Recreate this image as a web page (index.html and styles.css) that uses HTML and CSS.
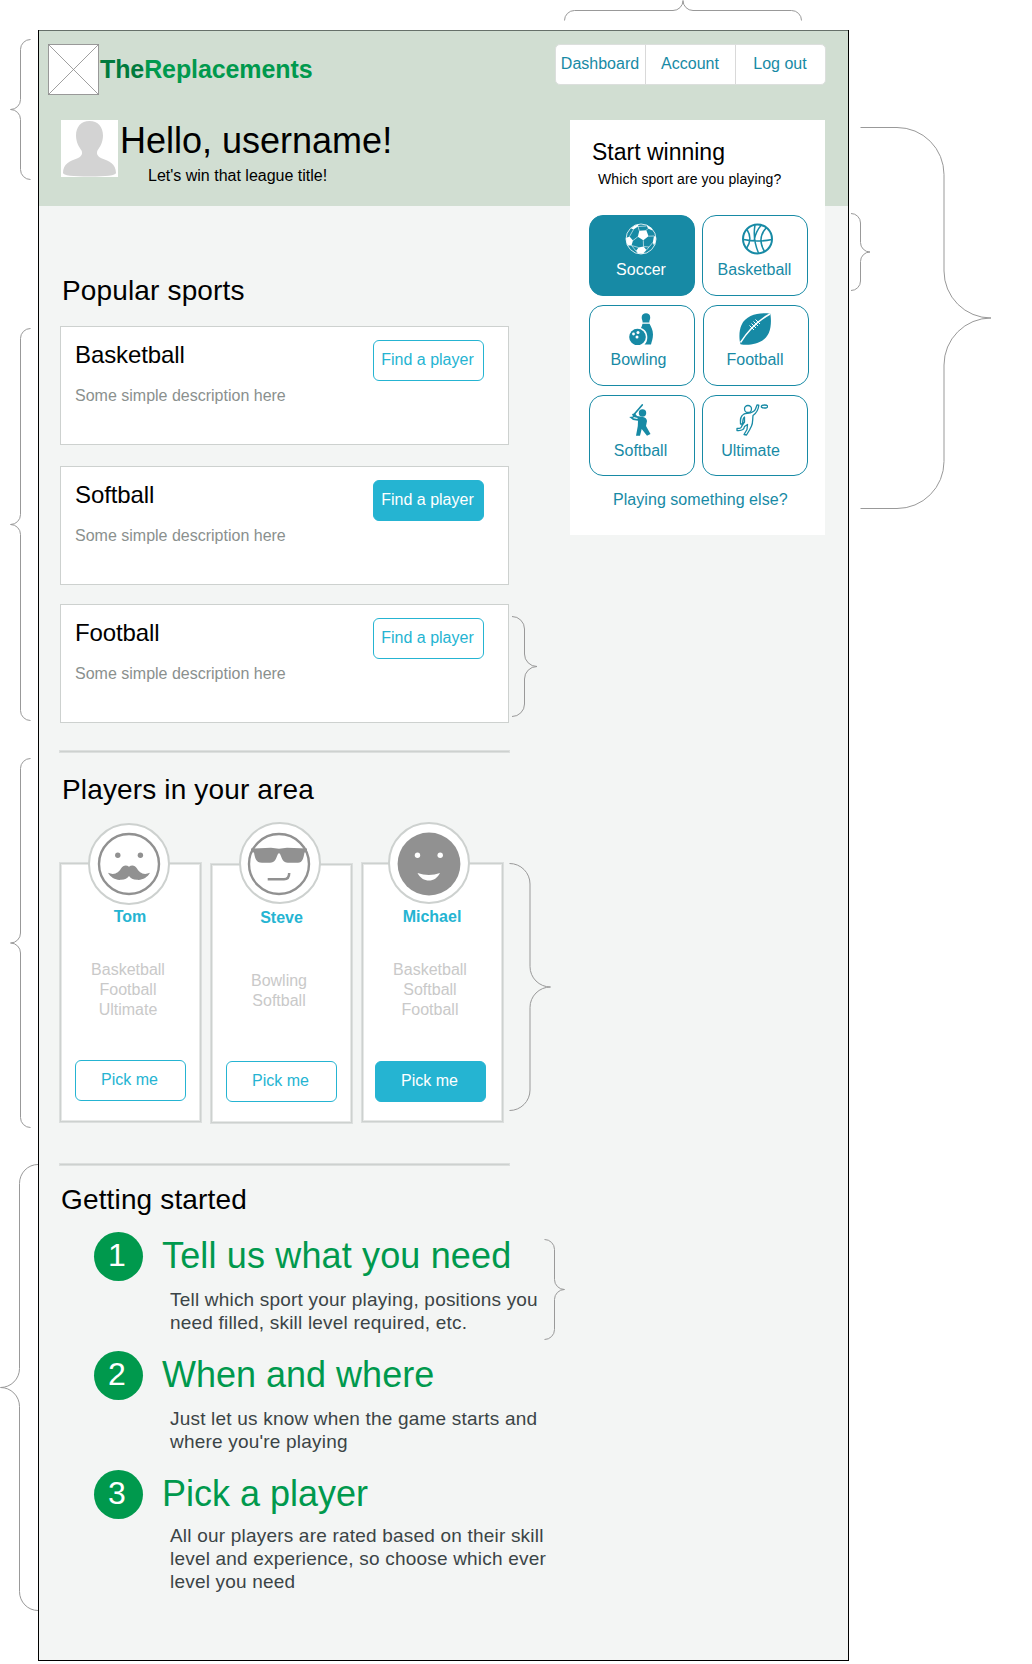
FILE: index.html
```html
<!DOCTYPE html>
<html lang="en">
<head>
<meta charset="utf-8">
<title>TheReplacements</title>
<link rel="stylesheet" href="styles.css">
</head>
<body>
<div class="frame">
  <header class="header">
    <div class="topbar">
      <div class="brand">
        <svg class="logo" width="51" height="51" viewBox="0 0 51 51"><rect x=".5" y=".5" width="50" height="50" fill="#fff" stroke="#999"/><path d="M.5 .5l50 50M50.500 .5l-50 50" stroke="#888" stroke-width=".8"/></svg>
        <span class="brand-name"><span class="brand-the">The</span>Replacements</span>
      </div>
      <nav class="nav">
        <a class="nav-item">Dashboard</a>
        <a class="nav-item">Account</a>
        <a class="nav-item">Log out</a>
      </nav>
    </div>
    <div class="greeting">
      <svg class="avatar" width="57" height="57" viewBox="0 0 57 57"><rect width="57" height="57" fill="#fff"/><path d="M28.500 1C37 1 42 7 42 15.500C42 22 39 27 36.500 30.500C35 34 36.500 36.500 41 38.500C48 41 55 44 55 53C55 55.500 45 56.500 28.500 56.500S2 55.500 2 53C2 44 9 41 16 38.500C20.500 36.500 22 34 20.500 30.500C18 27 15 22 15 15.500C15 7 20 1 28.500 1Z" fill="#d3d3d3"/></svg>
      <div>
        <h1 class="hello">Hello, username!</h1>
        <p class="tagline">Let's win that league title!</p>
      </div>
    </div>
  </header>

  <div class="columns">
    <main class="main">
      <h2 class="heading">Popular sports</h2>
      <section class="sports">
        <article class="sport"><div><h3 class="sport-name">Basketball</h3><p class="sport-text">Some simple description here</p></div><a class="button">Find a player</a></article>
        <article class="sport"><div><h3 class="sport-name">Softball</h3><p class="sport-text">Some simple description here</p></div><a class="button button-solid">Find a player</a></article>
        <article class="sport sport-last"><div><h3 class="sport-name">Football</h3><p class="sport-text">Some simple description here</p></div><a class="button">Find a player</a></article>
      </section>
      <hr class="rule">
      <h2 class="heading heading-players">Players in your area</h2>
      <section class="players">
        <article class="player player-tom">
          <div class="face"><svg width="64" height="64" viewBox="-32 -32 64 64"><circle r="30" fill="#fff" stroke="#919191" stroke-width="2.400"/><circle cx="-11.200" cy="-8.700" r="2.700" fill="#919191"/><circle cx="11.400" cy="-8.700" r="2.700" fill="#919191"/><path d="M0 2.800C2.500 .8 6 1.200 8 4.500C10 8 14 11.800 21 8.800C18.500 13.500 13 16.500 8 15.800C4 15.500 1.500 14.500 0 12C-1.500 14.500-4 15.500-8 15.800C-13 16.500-18.500 13.500-21 8.800C-14 11.800-10 8-8 4.500C-6 1.200-2.500 .8 0 2.800Z" fill="#919191"/></svg></div>
          <h3 class="player-name">Tom</h3>
          <ul class="player-sports"><li>Basketball</li><li>Football</li><li>Ultimate</li></ul>
          <a class="button">Pick me</a>
        </article>
        <article class="player player-steve">
          <div class="face"><svg width="64" height="64" viewBox="-32 -32 64 64"><circle r="30" fill="#fff" stroke="#919191" stroke-width="2.400"/><path d="M-28-15.500L-8-16.200L0-15.200L8-16.200L28-15.500V-12L25.500-11.500C24.500-6 23.500-1.200 19-1.200H9C4-1.200 3-5.500 1.300-9.500Q0-12-1.300-9.500C-3-5.500-4-1.200-9-1.200H-17C-23-1.200-24-6-25-11.500L-28-12Z" fill="#919191"/><path d="M-11.300 15.300H5Q10.200 15.300 10.200 9" fill="none" stroke="#919191" stroke-width="2.500"/></svg></div>
          <h3 class="player-name">Steve</h3>
          <ul class="player-sports"><li>Bowling</li><li>Softball</li></ul>
          <a class="button">Pick me</a>
        </article>
        <article class="player player-michael">
          <div class="face"><svg width="64" height="64" viewBox="-32 -32 64 64"><circle r="31.400" fill="#919191"/><circle cx="-11.500" cy="-8.700" r="2.700" fill="#fff"/><circle cx="11.200" cy="-8.700" r="2.700" fill="#fff"/><path d="M-11.500 9Q0 13 11 9C8.500 14 4.500 16.500 0 16.500S-9 14-11.500 9Z" fill="#fff"/></svg></div>
          <h3 class="player-name">Michael</h3>
          <ul class="player-sports"><li>Basketball</li><li>Softball</li><li>Football</li></ul>
          <a class="button button-solid">Pick me</a>
        </article>
      </section>
      <hr class="rule rule-steps">
      <h2 class="heading heading-steps">Getting started</h2>
      <ol class="steps">
        <li class="step"><span class="step-number">1</span><div><h3 class="step-title">Tell us what you need</h3><p class="step-text">Tell which sport your playing, positions you<br>need filled, skill level required, etc.</p></div></li>
        <li class="step"><span class="step-number">2</span><div><h3 class="step-title step-title-tight">When and where</h3><p class="step-text">Just let us know when the game starts and<br>where you're playing</p></div></li>
        <li class="step step-last"><span class="step-number">3</span><div><h3 class="step-title step-title-tight">Pick a player</h3><p class="step-text">All our players are rated based on their skill<br>level and experience, so choose which ever<br>level you need</p></div></li>
      </ol>
    </main>

    <aside class="widget">
      <h2 class="widget-title">Start winning</h2>
      <p class="widget-question">Which sport are you playing?</p>
      <div class="tiles">
        <a class="tile tile-solid tile-soccer">
          <svg class="tile-icon" viewBox="0 0 32 32"><circle cx="16" cy="16" r="15" fill="none" stroke="#fff" stroke-width="1" opacity=".8"/><g fill="#fff"><path d="M14.300 7.800L21.300 7.300L23.500 13.200L18.300 17.300L12.800 13.800Z"/><path d="M6 5.500Q9 2 13.500 1.200L13 3.500L8.500 6.500Z"/><path d="M1 15L4.500 13.500L8 17.500L6.500 22.500L2.700 22.500Q1 19.500 1 15Z"/><path d="M13.500 24.500L18.500 23.500L21.500 27L18 30.800L13 30.500L11 28Z"/><path d="M29 13L31 14Q31 19 29 22.500L27.800 19.500Z"/><path d="M21.500 2L26.500 5L27.500 7.500L23 5.500Z"/></g><path d="M13 3.500L14.300 7.800M13 3.500L21.500 3M21.300 7.300L23 5.500M23.500 13.200L29 13M18.300 17.300L18.500 23.500M12.800 13.800L8 17.500M8.500 6.500L4.500 13.500M6.500 22.500L11 28M6.500 22.500L13.500 24.500M27.800 19.500L24 24L18.500 23.500M24 24L21.500 27" fill="none" stroke="#fff" stroke-width=".8" opacity=".75"/></svg>
          <span class="tile-label">Soccer</span></a>
        <a class="tile tile-basketball">
          <svg class="tile-icon" viewBox="0 0 32 32"><g fill="none" stroke="#178aa5" stroke-width="1.500"><circle cx="15.500" cy="16" r="14.500" stroke-width="2"/><path d="M1.500 16.500Q16 19.500 30 16.500M13 2Q10.500 16 16.500 30M5 6.500Q11 16 4.500 25.500M19 2.500Q14 8 12.200 17M24.500 4.500Q14.500 15 22.500 28.500"/></g></svg>
          <span class="tile-label">Basketball</span></a>
        <a class="tile tile-bowling">
          <svg class="tile-icon" viewBox="0 0 32 32" fill="#178aa5"><path d="M13.600 9.500C13.900 7.500 12.500 6.500 12.700 4C13 1.500 14.500 .3 17 .3S21 1.500 21.200 4C21.400 6.500 20 7.500 20.400 9.500Z"/><path d="M13.500 10.700H20.500C22 13.500 24 17 24 21.500C24 26 22.500 29 22 31.500H15.500Q18.500 28.500 18.300 24C18.300 19 15.500 16 12 15Q13 13 13.500 10.700Z"/><circle cx="8.500" cy="24" r="8.300"/><g fill="#fff"><circle cx="4.500" cy="21" r="1.400"/><circle cx="9" cy="19.500" r="1.500"/><circle cx="8" cy="24" r="1.500"/></g></svg>
          <span class="tile-label">Bowling</span></a>
        <a class="tile tile-football">
          <svg class="tile-icon" viewBox="0 0 32 32"><path d="M31.300 .8C20 -1 7 2 2.500 12C-.2 18 0 26 1.500 31.200C10 33 25 31 29.800 20C32.500 14 32.200 5 31.300 .8Z" fill="#178aa5"/><g fill="none" stroke="#fff"><path d="M31 1C20 7 9 18 1.500 29.500" stroke-width="1.500"/><path d="M10.500 12.500l4.500 4.500M12.500 10.500l4.500 4.500M14.500 8.500l4.500 4.500M16.500 6.500l4.500 4.500" stroke-width="1"/></g></svg>
          <span class="tile-label">Football</span></a>
        <a class="tile tile-softball">
          <svg class="tile-icon" viewBox="0 0 32 32"><circle cx="13.500" cy="9" r="3.700" fill="#178aa5"/><path d="M5 10.500L13.200 1" stroke="#178aa5" stroke-width="1.700" stroke-linecap="round"/><path d="M.2 13L4 12.500L3 10L6 9.500L8 12L14 13Q17.500 13.500 18 17L17 22L21.500 30L18 31.800L12.700 25L11 31.800H7L8.800 22L9 16.800L4 16L2.500 14.800Z" fill="#178aa5"/><path d="M4.500 13.600L8.500 14.500" stroke="#fff" stroke-width="1.100"/></svg>
          <span class="tile-label">Softball</span></a>
        <a class="tile tile-ultimate">
          <svg class="tile-icon" viewBox="0 0 32 32"><g fill="none" stroke="#178aa5" stroke-width="1.300" stroke-linejoin="round"><circle cx="12" cy="5" r="3.500"/><ellipse cx="28.500" cy="2.500" rx="3.200" ry="1.500"/><path d="M21 1L22.800 1.200C22.500 5 21 8.500 17 11.500C16.500 16 17 19 15.500 22L13.500 26L10.500 31L8 30.500L11 25.500L11.500 20.500L8.500 22.500C8 26 6 27 1 26.500L1 24.500C4.500 24.500 5.500 24 6 21.500L8.500 18V13C6.500 14 7 17 6.500 20L4.500 20C4.200 16 4 12 8 10C12 9 18 9.500 19.500 5Z"/></g></svg>
          <span class="tile-label">Ultimate</span></a>
      </div>
      <a class="widget-more">Playing something else?</a>
    </aside>
  </div>
</div>

<svg class="braces" width="1032" height="1664" viewBox="0 0 1032 1664" fill="none" stroke="#999">
  <path d="M564.500 20.500a10 10 0 0 1 10-10H673a10 10 0 0 0 10-10a10 10 0 0 0 10 10H791.500a10 10 0 0 1 10 10"/>
  <path d="M30.500 39.500a10 10 0 0 0-10 10V99.500a10 10 0 0 1-10 10a10 10 0 0 1 10 10V169.500a10 10 0 0 0 10 10"/>
  <path d="M30.500 328.500a10 10 0 0 0-10 10V514.500a10 10 0 0 1-10 10a10 10 0 0 1 10 10V710.500a10 10 0 0 0 10 10"/>
  <path d="M30.500 758.500a10 10 0 0 0-10 10V933a10 10 0 0 1-10 10a10 10 0 0 1 10 10V1117.500a10 10 0 0 0 10 10"/>
  <path d="M38 1164.500a18.500 19 0 0 0-18.500 19V1368.500a19 19 0 0 1-19 19a19 19 0 0 1 19 19V1591.500a18.500 19 0 0 0 18.500 19"/>
  <path d="M860.500 127.500H897a47 47 0 0 1 47 47V271a47 47 0 0 0 47 47a47 47 0 0 0-47 47V461.500a47 47 0 0 1-47 47H860.500"/>
  <path d="M851 213.500a9.500 9.500 0 0 1 9.500 9.500V242.500a9.500 9.500 0 0 0 9.500 9.500a9.500 9.500 0 0 0-9.500 9.500V281a9.500 9.500 0 0 1-9.500 9.500"/>
  <path d="M512 616.500a12.500 12.500 0 0 1 12.500 12.500V654a12.500 12.500 0 0 0 12.500 12.500a12.500 12.500 0 0 0-12.500 12.500V704a12.500 12.500 0 0 1-12.500 12.500"/>
  <path d="M509.500 863.500a20.500 20.500 0 0 1 20.500 20.500V966.500a20.500 20.500 0 0 0 20.500 20.500a20.500 20.500 0 0 0-20.500 20.500V1090a20.500 20.500 0 0 1-20.500 20.500"/>
  <path d="M544.500 1239.500a10 10 0 0 1 10 10V1279.500a10 10 0 0 0 10 10a10 10 0 0 0-10 10V1329.500a10 10 0 0 1-10 10"/>
</svg>
</body>
</html>
```
FILE: styles.css
```css
* { box-sizing: border-box; }

body {
  position: relative;
  margin: 0;
  min-height: 1664px;
  padding: 30px 0 3px 38px;
  background: #fff;
  color: #000;
  font: 16px/20px "Liberation Sans", Arial, sans-serif;
}

h1, h2, h3, p, ul, ol { margin: 0; padding: 0; font-weight: normal; }
ul, ol { list-style: none; }
svg { display: block; flex: none; }

.frame {
  width: 811px;
  height: 1631px;
  border: 1px solid #000;
  background: #f3f5f4;
}

/* Header */
.header {
  height: 176px;
  margin-top: -1px;
  padding: 13px 22px 0 9px;
  border-top: 1px solid #66706a;
  background: #d1ded2;
}
.topbar { display: flex; justify-content: space-between; align-items: flex-start; }
.brand { display: flex; align-items: center; }
.brand-name {
  margin: -2px 0 0 1px;
  color: #00994d;
  font-size: 25px;
  font-weight: bold;
  line-height: 28px;
  letter-spacing: -.1px;
}
.brand-the { color: #007a3d; }
.nav {
  display: flex;
  width: 271px;
  height: 41px;
  border: 1px solid #dcdfdd;
  border-radius: 5px;
  background: #fff;
}
.nav-item {
  flex: 1 1 0;
  padding: 9px 1px 0 0;
  color: #178aa5;
  text-align: center;
}
.nav-item + .nav-item { border-left: 1px solid #d9d9d9; }
.greeting { display: flex; margin: 25px 0 0 13px; }
.hello { margin: 0 0 0 2px; font-size: 36px; line-height: 41px; }
.tagline { margin: 5px 0 0 30px; }

.columns { display: flex; align-items: flex-start; }

/* Main column */
.main { width: 510px; padding: 69px 0 0 21px; }
.heading { padding-left: 2px; font-size: 28px; line-height: 32px; letter-spacing: .15px; }

.sports { margin-top: 19px; }
.sport {
  display: flex;
  justify-content: space-between;
  width: 449px;
  height: 119px;
  margin-bottom: 21px;
  padding: 13px 24px 0 14px;
  border: 1px solid #cdd1cf;
  background: #fff;
}
.sport:nth-child(2) { margin-bottom: 19px; }
.sport-last { margin-bottom: 0; }
.sport-name { margin-top: 1px; font-size: 24px; line-height: 28px; letter-spacing: -.1px; }
.sport-text { margin-top: 17px; color: #8a908e; }

.button {
  display: block;
  width: 111px;
  height: 41px;
  padding: 9px 2px 0 0;
  border: 1px solid #25b4d2;
  border-radius: 6px;
  color: #25b4d2;
  text-align: center;
}
.button-solid { background: #25b4d2; color: #fff; }

.rule {
  width: 449px;
  height: 1px;
  margin: 28px 0 0;
  border: 0;
  background: #cdd1cf;
  box-shadow: 0 0 0 1px rgba(205, 209, 207, .6);
}
.heading-players { margin-top: 22px; }

/* Player cards */
.players { display: flex; align-items: flex-start; gap: 10px; margin-top: 57px; height: 260px; }
.player {
  display: flex;
  flex-direction: column;
  align-items: center;
  width: 141px;
  height: 259px;
  border: 1px solid #cdd1cf;
  background: #fff;
  box-shadow: 0 0 0 1px rgba(205, 209, 207, .6), inset 0 0 0 1px rgba(205, 209, 207, .5);
}
.player-steve { margin-top: 1px; }
.face {
  display: flex;
  align-items: center;
  justify-content: center;
  flex: none;
  width: 82px;
  height: 82px;
  margin-top: -41px;
  margin-left: -3px;
  border: 2px solid #cdd1cf;
  border-radius: 50%;
  background: #fff;
}
.player-tom .face { padding: 0 1px 1px 0; }
.player-steve .face { margin-top: -43px; padding-top: 1px; padding-right: 2px; }
.player-michael .face { margin-top: -42px; margin-left: -7px; padding-top: 1px; padding-right: 1px; }
.player-name {
  margin-top: 2px;
  color: #25b4d2;
  font-size: 16px;
  font-weight: bold;
  line-height: 20px;
}
.player-tom .player-name { margin-right: 1px; }
.player-michael .player-name { margin: 3px 1px 0 0; }
.player-steve .player-name { margin-top: 4px; }
.player-sports {
  display: flex;
  flex-direction: column;
  justify-content: center;
  height: 62px;
  margin: 32px 5px 32px 0;
  color: #c9c9c9;
  text-align: center;
}
.player .button { margin-top: 7px; }
.player-michael .button { margin: 8px 4px 0 0; }

/* Steps */
.rule-steps { margin-top: 41px; }
.heading-steps { margin: 19px 0 0; padding-left: 1px; }
.steps { margin: 16px 0 0 34px; }
.step { display: flex; height: 119px; }
.step-number {
  flex: none;
  width: 49px;
  height: 49px;
  padding: 5px 3px 0 0;
  border-radius: 50%;
  background: #00994d;
  color: #fff;
  font-size: 32px;
  line-height: 37px;
  text-align: center;
}
.step-title {
  margin: 3px 0 0 19px;
  color: #00994d;
  font-size: 36px;
  line-height: 41px;
  letter-spacing: .15px;
  white-space: nowrap;
}
.step-title-tight { letter-spacing: 0; }
.step-text {
  margin: 12px 0 0 27px;
  color: #3b4446;
  font-size: 19px;
  line-height: 23px;
  letter-spacing: .2px;
  white-space: nowrap;
}
.step-last .step-text { margin-top: 10px; }

/* Sport picker */
.widget {
  width: 255px;
  height: 415px;
  margin: -86px 0 0 21px;
  padding: 18px 15px 0 19px;
  background: #fff;
}
.widget-title { padding-left: 3px; font-size: 23px; line-height: 28px; }
.widget-question { margin-top: 3px; padding-left: 9px; font-size: 14px; line-height: 20px; letter-spacing: .1px; white-space: nowrap; }
.tiles {
  display: grid;
  grid-template-columns: 106px 106px;
  gap: 9px 7px;
  margin-top: 26px;
}
.tile {
  height: 81px;
  border: 1px solid #178aa5;
  border-radius: 14px;
  color: #178aa5;
}
.tile-solid { background: #178aa5; color: #fff; }
.tile-icon { width: 32px; height: 32px; margin: 7px 0 0 35px; }
.tile-label { display: block; margin-top: 5px; text-align: center; }
.tile-soccer .tile-label { margin-right: 2px; }
.tile-basketball .tile-icon { margin-left: 39px; }
.tile-basketball .tile-label { margin-right: 1px; }
.tile-bowling .tile-icon { margin-left: 39px; }
.tile-bowling .tile-label { margin-right: 7px; }
.tile-football .tile-label { margin-right: 2px; }
.tile-football { width: 106px; margin-left: 1px; }
.tile-softball .tile-icon { margin-top: 8px; margin-left: 39px; }
.tile-softball .tile-label { margin-right: 3px; }
.tile-ultimate .tile-icon { margin-top: 8px; margin-left: 33px; }
.tile-ultimate .tile-label { margin-right: 9px; }
.widget-more { display: block; margin: 14px 0 0 24px; color: #178aa5; letter-spacing: .05px; white-space: nowrap; }

/* Callout braces drawn over and around the frame */
.braces { position: absolute; top: 0; left: 0; pointer-events: none; }
```
